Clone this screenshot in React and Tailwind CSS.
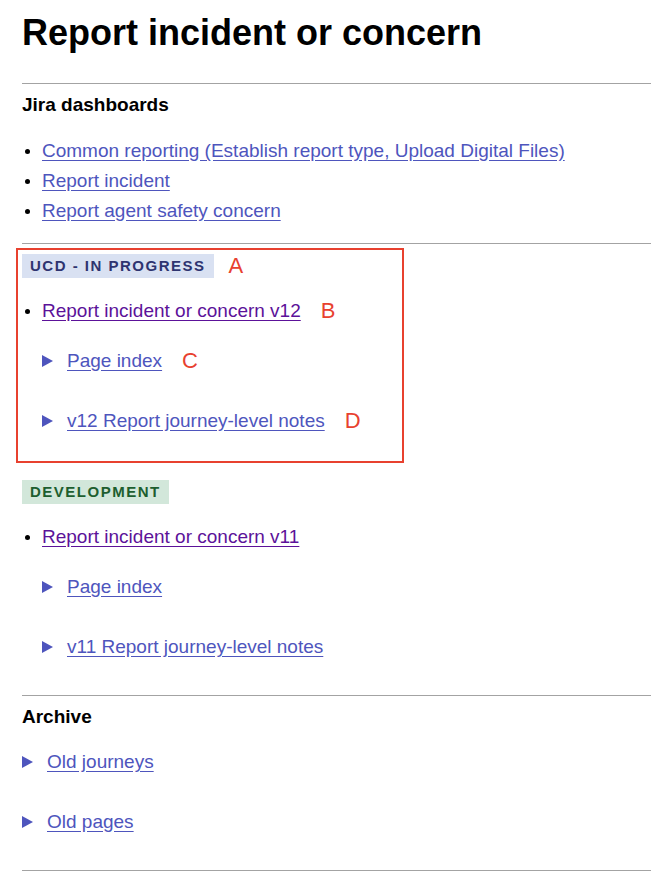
import React from 'react';

const Tri = () => (
  <svg width="11" height="12" viewBox="0 0 11 12" className="shrink-0">
    <polygon points="0,0 11,6 0,12" fill="#4e55bd" />
  </svg>
);

const Bullet = ({ children, visited }) => (
  <div className="flex items-center h-[30px]">
    <span className="ml-[25px] w-[5px] h-[5px] rounded-full bg-black shrink-0" />
    <a href="#" className={`ml-[12px] underline underline-offset-[3px] ${visited ? 'text-[#5c1299]' : 'text-[#4e55bd]'}`}>
      {children}
    </a>
  </div>
);

const Toggle = ({ children, indent, mt }) => (
  <div className={`flex items-center h-[30px] ${indent ? 'pl-[20px]' : ''} ${mt}`}>
    <Tri />
    <a href="#" className="ml-[14px] text-[#4e55bd] underline underline-offset-[3px]">{children}</a>
  </div>
);

const Mark = ({ children }) => (
  <span className="ml-5 text-[22px] text-[#e8412f] leading-none">{children}</span>
);

const Rule = ({ mt }) => <div className={`h-px bg-[#a3a3a3] ${mt}`} />;

export default function App() {
  return (
    <div className="bg-white min-h-screen pl-[22px] pr-[20px] pt-[13px] pb-[6px] text-[19px] text-black" style={{ fontFamily: '"Liberation Sans", Arial, sans-serif' }}>
      <h1 className="text-[36px] font-bold leading-[40px]">Report incident or concern</h1>

      <Rule mt="mt-[30px]" />
      <h2 className="mt-[9px] h-[24px] flex items-center text-[19px] font-bold">Jira dashboards</h2>

      <div className="mt-[19px] -ml-[22px]">
        <Bullet>Common reporting (Establish report type, Upload Digital Files)</Bullet>
        <Bullet>Report incident</Bullet>
        <Bullet>Report agent safety concern</Bullet>
      </div>

      <Rule mt="mt-[17px]" />

      <div className="mt-[4px] -ml-[6px] w-[388px] border-2 border-[#e8412f] pl-[4px] pt-[4px] pb-[25px]">
        <div className="flex items-center">
          <span className="h-[24px] flex items-center px-2 bg-[#d9e1f2] text-[#2e3470] text-[15px] font-bold tracking-[1.5px]">UCD - IN PROGRESS</span>
          <span className="ml-[15px] text-[22px] text-[#e8412f] leading-none">A</span>
        </div>
        <div className="mt-[18px] -ml-[22px] flex items-center">
          <Bullet visited>Report incident or concern v12</Bullet>
          <Mark>B</Mark>
        </div>
        <div className="mt-[20px] flex items-center">
          <Toggle indent>Page index</Toggle>
          <Mark>C</Mark>
        </div>
        <div className="mt-[30px] flex items-center">
          <Toggle indent>v12 Report journey-level notes</Toggle>
          <Mark>D</Mark>
        </div>
      </div>

      <div className="mt-[17px] flex">
        <span className="h-[24px] flex items-center px-2 bg-[#d2e7da] text-[#1d5e2f] text-[15px] font-bold tracking-[1.5px]">DEVELOPMENT</span>
      </div>
      <div className="mt-[18px] -ml-[22px]">
        <Bullet visited>Report incident or concern v11</Bullet>
      </div>
      <Toggle indent mt="mt-[20px]">Page index</Toggle>
      <Toggle indent mt="mt-[30px]">v11 Report journey-level notes</Toggle>

      <Rule mt="mt-[33px]" />
      <h2 className="mt-[9px] h-[24px] flex items-center text-[19px] font-bold">Archive</h2>
      <Toggle mt="mt-[18px]">Old journeys</Toggle>
      <Toggle mt="mt-[30px]">Old pages</Toggle>
      <Rule mt="mt-[33px]" />
    </div>
  );
}
